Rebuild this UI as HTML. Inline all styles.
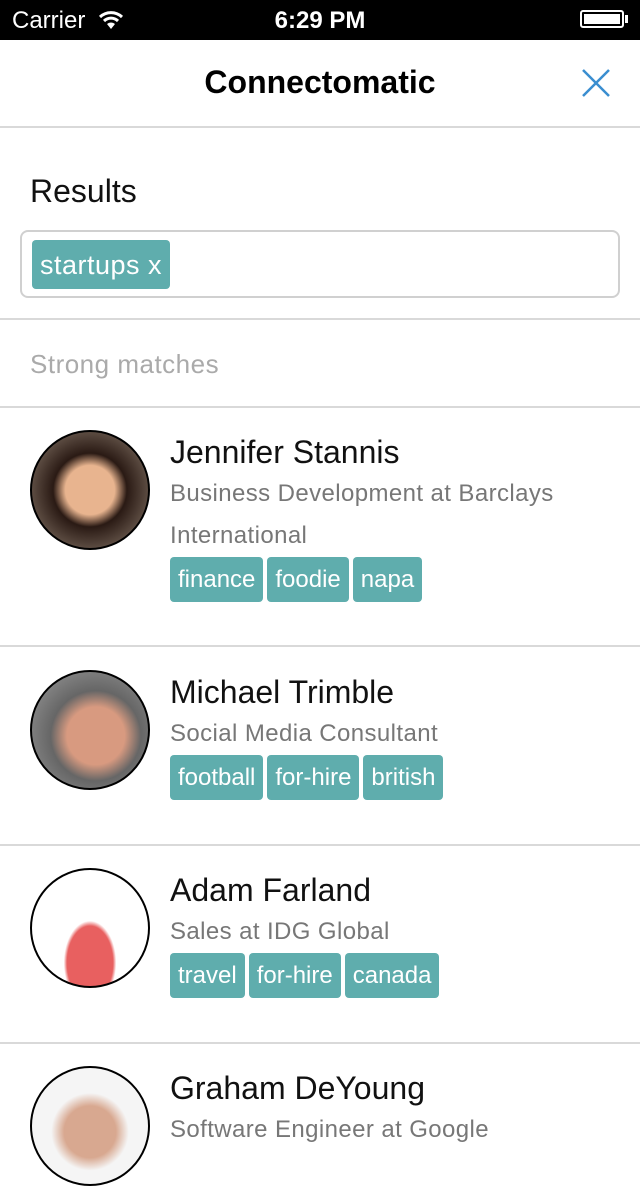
<html><head><style>
body{margin:0;width:640px;height:1136px;overflow:hidden;background:#fff;font-family:"Liberation Sans",sans-serif;position:relative}
.a{position:absolute}
.sep{position:absolute;left:0;width:640px;height:2px;background:#d9d9d9}
.name{position:absolute;left:170px;font-size:32px;color:#111;white-space:nowrap}
.sub{position:absolute;left:170px;font-size:24px;letter-spacing:0.4px;color:#777;white-space:nowrap}
.tags{position:absolute;left:170px;display:flex;gap:4px}
.tag{background:#5fadad;color:#fff;font-size:24px;height:45px;line-height:45px;padding:0 8px;border-radius:4px}
.av{position:absolute;left:30px;width:116px;height:116px;border:2px solid #000;border-radius:50%;overflow:hidden}
</style></head><body>
<div class="a" style="left:0;top:0;width:640px;height:40px;background:#000;color:#fff">
<div class="a" style="left:12px;top:7px;font-size:24px">Carrier</div>
<svg class="a" style="left:98px;top:10px" width="26" height="20" viewBox="0 0 26 20"><path d="M2 7 A16 16 0 0 1 24 7" stroke="#fff" stroke-width="3" fill="none"/><path d="M6 11 A10 10 0 0 1 20 11" stroke="#fff" stroke-width="3" fill="none"/><path d="M13 19 L9 14 A6 6 0 0 1 17 14Z" fill="#fff"/></svg>
<div class="a" style="left:0;width:640px;text-align:center;top:7px;font-size:24px;font-weight:bold">6:29 PM</div>
<div class="a" style="left:580px;top:10px;width:44px;height:18px;border:2px solid #fff;border-radius:3px;box-sizing:border-box;padding:2px"><div style="background:#fff;width:100%;height:100%"></div></div>
<div class="a" style="left:625px;top:15px;width:3px;height:8px;background:#fff"></div>
</div>
<div class="a" style="left:0;width:640px;top:64px;text-align:center;font-size:32px;font-weight:bold;color:#000">Connectomatic</div>
<svg class="a" style="left:582px;top:69px" width="28" height="28"><path d="M1 1L27 27M27 1L1 27" stroke="#3a8ed0" stroke-width="2.5"/></svg>
<div class="sep" style="top:126px"></div>
<div class="a" style="left:30px;top:173px;font-size:32px;color:#111">Results</div>
<div class="a" style="left:20px;top:230px;width:596px;height:64px;border:2px solid #d0d0d0;border-radius:8px"></div>
<div class="a tag" style="left:32px;top:240px;height:49px;line-height:51px;font-size:27px;letter-spacing:0.5px">startups x</div>
<div class="sep" style="top:318px"></div>
<div class="a" style="left:30px;top:349px;font-size:26px;letter-spacing:0.5px;color:#aaa">Strong matches</div>
<div class="sep" style="top:406px"></div>

<div class="av" style="top:430px;background:radial-gradient(circle at 50% 50%,#e8b48f 0 30%,#2a1a14 45%,#5a4a40 70%)"></div>
<div class="name" style="top:434px">Jennifer Stannis</div>
<div class="sub" style="top:480px">Business Development at Barclays</div>
<div class="sub" style="top:522px">International</div>
<div class="tags" style="top:557px"><span class="tag">finance</span><span class="tag">foodie</span><span class="tag">napa</span></div>
<div class="sep" style="top:645px"></div>

<div class="av" style="top:670px;background:radial-gradient(circle at 55% 55%,#d89a80 0 32%,#666 50%,#888 80%)"></div>
<div class="name" style="top:674px">Michael Trimble</div>
<div class="sub" style="top:720px">Social Media Consultant</div>
<div class="tags" style="top:755px"><span class="tag">football</span><span class="tag">for-hire</span><span class="tag">british</span></div>
<div class="sep" style="top:844px"></div>

<div class="av" style="top:868px;background:radial-gradient(ellipse at 50% 80%,#e86060 0 28%,#fff 32%)"></div>
<div class="name" style="top:872px">Adam Farland</div>
<div class="sub" style="top:918px">Sales at IDG Global</div>
<div class="tags" style="top:953px"><span class="tag">travel</span><span class="tag">for-hire</span><span class="tag">canada</span></div>
<div class="sep" style="top:1042px"></div>

<div class="av" style="top:1066px;background:radial-gradient(circle at 50% 55%,#d8a890 0 30%,#f5f5f5 45%)"></div>
<div class="name" style="top:1070px">Graham DeYoung</div>
<div class="sub" style="top:1116px">Software Engineer at Google</div>
</body></html>
